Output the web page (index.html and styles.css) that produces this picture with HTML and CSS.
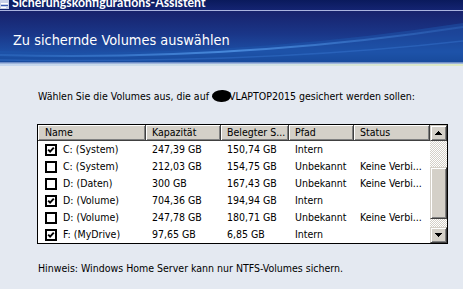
FILE: index.html
```html
<!DOCTYPE html>
<html lang="de">
<head>
<meta charset="utf-8">
<title>Sicherungskonfigurations-Assistent</title>
<link rel="stylesheet" href="styles.css">
</head>
<body>
<div class="titlebar">
  <svg class="app-icon" width="10" height="10" viewBox="0 0 10 10">
    <rect x="0" y="0" width="9" height="9" fill="#c8d0e8"/>
    <rect x="1" y="3" width="7" height="1" fill="#ffffff"/>
    <rect x="1" y="5" width="7" height="1" fill="#3a5ab0"/>
    <rect x="1" y="7" width="5" height="1" fill="#ffffff"/>
  </svg>
  <span class="title-text">Sicherungskonfigurations-Assistent</span>
</div>
<div class="rule"></div>
<div class="header">
  <svg class="header-art" viewBox="0 0 463 51" preserveAspectRatio="none">
    <defs>
      <linearGradient id="hg" x1="0" y1="0" x2="0" y2="1">
        <stop offset="0" stop-color="#17226c"/>
        <stop offset="0.45" stop-color="#1a3688"/>
        <stop offset="0.8" stop-color="#1d4ea4"/>
        <stop offset="1" stop-color="#13408e"/>
      </linearGradient>
      <linearGradient id="wv" x1="0" y1="0" x2="1" y2="0">
        <stop offset="0" stop-color="#4a90e8" stop-opacity="0.25"/>
        <stop offset="0.5" stop-color="#5aa0f0" stop-opacity="0.7"/>
        <stop offset="1" stop-color="#3c7ad0" stop-opacity="0.3"/>
      </linearGradient>
    </defs>
    <rect width="463" height="51" fill="url(#hg)"/>
    <path d="M0 40 Q230 48 463 12 L463 51 L0 51Z" fill="#2058b0" opacity="0.45"/>
    <path d="M0 44 Q240 50 463 16" stroke="url(#wv)" stroke-width="2" fill="none"/>
    <path d="M0 49 Q260 53 463 30" stroke="#3b7ad4" stroke-opacity="0.4" stroke-width="1.5" fill="none"/>
  </svg>
  <h1 class="header-title">Zu sichernde Volumes auswählen</h1>
</div>
<div class="strip"></div>
<main class="content">
  <p class="intro">Wählen Sie die Volumes aus, die auf <span class="redact"></span>VLAPTOP2015 gesichert werden sollen:</p>
  <div class="lv">
    <div class="lv-cols">
      <div class="lv-head">
        <div class="th first">Name</div>
        <div class="th">Kapazität</div>
        <div class="th">Belegter S...</div>
        <div class="th">Pfad</div>
        <div class="th">Status</div>
      </div>
      <div class="lv-row">
        <div class="td name"><svg class="cb" viewBox="0 0 12 12"><rect x="1" y="1" width="10" height="10" fill="#fff" stroke="#000" stroke-width="2"/><path d="M3.2 5.6 L5.1 7.6 L8.8 3.6" stroke="#000" stroke-width="2" fill="none"/></svg>C: (System)</div>
        <div class="td">247,39 GB</div><div class="td">150,74 GB</div><div class="td">Intern</div><div class="td"></div>
      </div>
      <div class="lv-row">
        <div class="td name"><svg class="cb" viewBox="0 0 12 12"><rect x="1" y="1" width="10" height="10" fill="#fff" stroke="#000" stroke-width="2"/></svg>C: (System)</div>
        <div class="td">212,03 GB</div><div class="td">154,75 GB</div><div class="td">Unbekannt</div><div class="td">Keine Verbi...</div>
      </div>
      <div class="lv-row">
        <div class="td name"><svg class="cb" viewBox="0 0 12 12"><rect x="1" y="1" width="10" height="10" fill="#fff" stroke="#000" stroke-width="2"/></svg>D: (Daten)</div>
        <div class="td">300 GB</div><div class="td">167,43 GB</div><div class="td">Unbekannt</div><div class="td">Keine Verbi...</div>
      </div>
      <div class="lv-row">
        <div class="td name"><svg class="cb" viewBox="0 0 12 12"><rect x="1" y="1" width="10" height="10" fill="#fff" stroke="#000" stroke-width="2"/><path d="M3.2 5.6 L5.1 7.6 L8.8 3.6" stroke="#000" stroke-width="2" fill="none"/></svg>D: (Volume)</div>
        <div class="td">704,36 GB</div><div class="td">194,94 GB</div><div class="td">Intern</div><div class="td"></div>
      </div>
      <div class="lv-row">
        <div class="td name"><svg class="cb" viewBox="0 0 12 12"><rect x="1" y="1" width="10" height="10" fill="#fff" stroke="#000" stroke-width="2"/></svg>D: (Volume)</div>
        <div class="td">247,78 GB</div><div class="td">180,71 GB</div><div class="td">Unbekannt</div><div class="td">Keine Verbi...</div>
      </div>
      <div class="lv-row">
        <div class="td name"><svg class="cb" viewBox="0 0 12 12"><rect x="1" y="1" width="10" height="10" fill="#fff" stroke="#000" stroke-width="2"/><path d="M3.2 5.6 L5.1 7.6 L8.8 3.6" stroke="#000" stroke-width="2" fill="none"/></svg>F: (MyDrive)</div>
        <div class="td">97,65 GB</div><div class="td">6,85 GB</div><div class="td">Intern</div><div class="td"></div>
      </div>
    </div>
    <div class="sb">
      <div class="sb-btn"><svg width="7" height="4" viewBox="0 0 7 4" shape-rendering="crispEdges"><path d="M3 0h1v1h1v1h1v1h1v1H0V3h1V2h1V1h1z" fill="#000"/></svg></div>
      <div class="sb-track top"></div>
      <div class="sb-thumb"></div>
      <div class="sb-track bottom"></div>
      <div class="sb-btn"><svg width="7" height="4" viewBox="0 0 7 4" shape-rendering="crispEdges"><path d="M0 0h7v1H6v1H5v1H4v1H3V3H2V2H1V1H0z" fill="#000"/></svg></div>
    </div>
  </div>
  <p class="hint">Hinweis: Windows Home Server kann nur NTFS-Volumes sichern.</p>
</main>
</body>
</html>
```

FILE: styles.css
```css
* { box-sizing: border-box; }
html, body { margin: 0; padding: 0; }
body {
  width: 463px;
  height: 289px;
  overflow: hidden;
  background: #e4e9f1;
  font-family: "DejaVu Sans Condensed", "Liberation Sans", sans-serif;
  font-size: 10.5px;
  color: #000;
}
.titlebar {
  height: 10px;
  overflow: hidden;
  display: flex;
  align-items: flex-start;
  background: linear-gradient(#0a1a5c, #142472);
}
.app-icon { flex: none; margin: 0 2px 0 0; }
.title-text {
  display: block;
  margin-top: -5px;
  font: bold 12.3px/16px Lato, "Liberation Sans", sans-serif;
  color: #fff;
  white-space: nowrap;
}
.rule { height: 1px; background: #aab4e0; }
.header {
  position: relative;
  height: 51px;
  padding: 21px 0 0 13px;
}
.header-art { position: absolute; inset: 0; width: 100%; height: 100%; display: block; }
.header-title {
  position: relative;
  margin: 0;
  font: normal 14.4px/17px "DejaVu Sans Condensed", "Liberation Sans", sans-serif;
  color: #fff;
}
.strip {
  height: 4px;
  background:
    linear-gradient(to bottom, #6f8dc6 0 1px, #9fb6dc 1px 2px, transparent 2px),
    linear-gradient(to right, #c4d6ee, #d2e2e4 60%, #dde9c2);
}
.content { padding: 24px 0 0 37px; }
.intro {
  margin: 0;
  padding-left: 1px;
  line-height: 13px;
  white-space: nowrap;
}
.redact {
  display: inline-block;
  width: 19px;
  height: 12px;
  background: #000;
  border-radius: 55% 45% 50% 50%;
  vertical-align: middle;
  margin: -2px -2px 0 0;
}
.lv {
  margin-top: 21px;
  width: 411px;
  height: 120px;
  border: 1px solid #000;
  background: #fff;
  display: flex;
}
.lv-cols { width: 392px; flex: none; }
.lv-head, .lv-row {
  display: grid;
  grid-template-columns: 108px 75px 68px 65px 76px;
}
.lv-head { height: 16px; }
.lv-row { height: 17px; }
.th {
  background: #d4d0c8;
  border-right: 1px solid #404040;
  border-bottom: 1px solid #404040;
  box-shadow: inset 1px 1px #fff, inset -1px -1px #808080;
  padding-left: 6px;
  line-height: 15px;
  white-space: nowrap;
  overflow: hidden;
}
.th.first { padding-left: 7px; }
.td {
  padding-left: 6px;
  line-height: 17px;
  white-space: nowrap;
  overflow: hidden;
}
.td.name {
  padding-left: 7px;
  display: flex;
  align-items: center;
  gap: 6px;
}
.cb { width: 12px; height: 12px; flex: none; }
.sb {
  width: 17px;
  flex: none;
  display: flex;
  flex-direction: column;
}
.sb-btn, .sb-thumb {
  background: #d4d0c8;
  border: 1px solid;
  border-color: #d4d0c8 #404040 #404040 #d4d0c8;
  box-shadow: inset 1px 1px #fff, inset -1px -1px #808080;
}
.sb-btn {
  height: 16px;
  display: flex;
  align-items: center;
  justify-content: center;
}
.sb-track {
  background: repeating-conic-gradient(#ffffff 0 25%, #d4d0c8 0 50%) 0 0 / 2px 2px;
}
.sb-track.top { height: 26px; }
.sb-thumb { height: 52px; }
.sb-track.bottom { height: 8px; }
.hint {
  margin: 18px 0 0;
  padding-left: 1px;
  line-height: 13px;
  white-space: nowrap;
}
```
